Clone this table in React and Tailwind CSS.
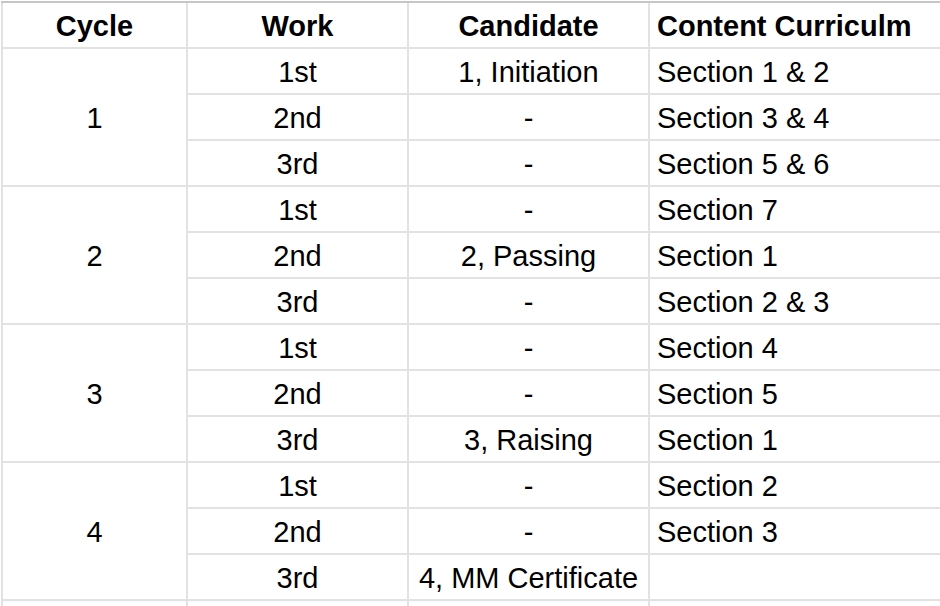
import React from "react";

const cycles = [
  {
    id: "1",
    rows: [
      ["1st", "1, Initiation", "Section 1 & 2"],
      ["2nd", "-", "Section 3 & 4"],
      ["3rd", "-", "Section 5 & 6"],
    ],
  },
  {
    id: "2",
    rows: [
      ["1st", "-", "Section 7"],
      ["2nd", "2, Passing", "Section 1"],
      ["3rd", "-", "Section 2 & 3"],
    ],
  },
  {
    id: "3",
    rows: [
      ["1st", "-", "Section 4"],
      ["2nd", "-", "Section 5"],
      ["3rd", "3, Raising", "Section 1"],
    ],
  },
  {
    id: "4",
    rows: [
      ["1st", "-", "Section 2"],
      ["2nd", "-", "Section 3"],
      ["3rd", "4, MM Certificate", ""],
    ],
  },
];

const cell = "bg-white flex items-center justify-center whitespace-nowrap pt-[4px]";
const left = "bg-white flex items-center whitespace-nowrap pl-[7px] pt-[4px]";

export default function App() {
  return (
    <div
      className="h-[606px] w-[940px] overflow-hidden bg-white pt-[1px] text-[29px] text-black"
      style={{ fontFamily: '"Liberation Sans", Arial, sans-serif' }}
    >
      <div className="ml-[1px] grid grid-cols-[183px_219px_239px_1fr] auto-rows-[44px] gap-[2px] border-t-2 border-[#c4c7c5] bg-[#e2e2e2] pl-[2px]">
        {/* header */}
        <div className={`${cell} font-bold`}>Cycle</div>
        <div className={`${cell} font-bold`}>Work</div>
        <div className={`${cell} font-bold`}>Candidate</div>
        <div className={`${left} font-bold`}>Content Curriculm</div>

        {cycles.map((c) => (
          <React.Fragment key={c.id}>
            <div className={`${cell} row-span-3`}>{c.id}</div>
            {c.rows.map((r, i) => (
              <React.Fragment key={i}>
                <div className={cell}>{r[0]}</div>
                <div className={cell}>{r[1]}</div>
                <div className={left}>{r[2]}</div>
              </React.Fragment>
            ))}
          </React.Fragment>
        ))}

        {/* next (empty) row, cut off by the window */}
        <div className="bg-white" />
        <div className="bg-white" />
        <div className="bg-white" />
        <div className="bg-white" />
      </div>
    </div>
  );
}
